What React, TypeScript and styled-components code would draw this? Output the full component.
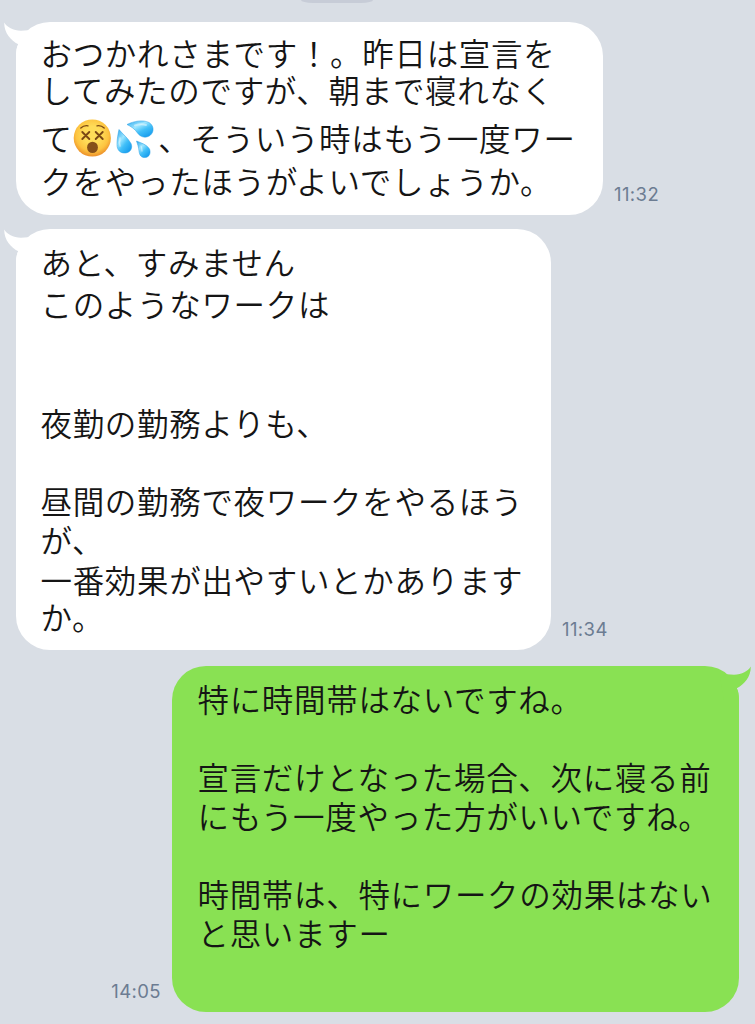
import React from 'react';
import styled, { createGlobalStyle } from 'styled-components';

const GlobalStyle = createGlobalStyle`
  body {
    margin: 0;
    background: #d9dee5;
  }
`;

const Screen = styled.main`
  position: relative;
  box-sizing: border-box;
  width: 755px;
  height: 1024px;
  overflow: hidden;
  background: #d9dee5;
  display: flex;
  flex-direction: column;
`;

const DatePill = styled.div`
  flex: none;
  align-self: center;
  width: 72px;
  height: 3px;
  margin-right: 81px;
  border-radius: 0 0 12px 12px / 0 0 3px 3px;
  background: #c7ccd7;
`;

const Thread = styled.div`
  flex: none;
  display: flex;
  flex-direction: column;
  padding: 18.5px 16px 0;
`;

const MessageRow = styled.div<{ $mine?: boolean; $gap?: number }>`
  display: flex;
  flex-direction: ${(p) => (p.$mine ? 'row-reverse' : 'row')};
  align-items: flex-end;
  gap: 11px;
  margin-top: ${(p) => p.$gap ?? 0}px;
`;

const Bubble = styled.div<{ $mine?: boolean; $width: number; $height: number }>`
  position: relative;
  box-sizing: border-box;
  flex: none;
  width: ${(p) => p.$width}px;
  height: ${(p) => p.$height}px;
  padding: ${(p) => (p.$mine ? '11px 0 0 25.5px' : '12px 0 0 24.5px')};
  border-radius: 34px;
  background: ${(p) => (p.$mine ? '#89e153' : '#ffffff')};
  color: #151515;
  font-family: 'Noto Sans CJK JP', sans-serif;
  font-weight: 350;
  font-size: 31.5px;
  letter-spacing: 0.68px;
`;

const Tail = styled.svg<{ $mine?: boolean }>`
  position: absolute;
  top: 0;
  ${(p) => (p.$mine ? 'right: -13px; transform: scaleX(-1);' : 'left: -13px;')}
  width: 44px;
  height: 36px;
`;

const Line = styled.div<{ $gap?: number }>`
  display: flex;
  height: 36px;
  line-height: 36px;
  margin-top: ${(p) => p.$gap ?? 3}px;
  white-space: pre;
`;

const Emoji = styled.svg`
  flex: none;
  width: 42px;
  height: 42px;
  margin-top: -1.5px;
`;

const AfterEmoji = styled.span`
  margin-left: 1.5px;
`;

const Time = styled.time`
  padding-bottom: 9px;
  color: #6c7c92;
  font: 400 18.5px/24px Inter, sans-serif;
  letter-spacing: 0.4px;
`;

const BubbleTail = ({ mine }: { mine?: boolean }) => (
  <Tail $mine={mine} viewBox="0 0 44 36" aria-hidden>
    <path
      d="M1.2 0.5 C4 5 10 8.5 18 8.8 L25 8.3 L32 12 L28 34 L13 34 C13 29 13.6 25 15.2 22.2 C8 18.5 1.2 11.5 1.2 0.5Z"
      fill={mine ? '#89e153' : '#ffffff'}
    />
  </Tail>
);

const DizzyFace = () => (
  <Emoji viewBox="0 0 42 42" role="img" aria-label="dizzy face">
    <defs>
      <radialGradient id="face" cx="50%" cy="42%" r="58%">
        <stop offset="0.4" stopColor="#ffdc58" />
        <stop offset="0.75" stopColor="#fdc440" />
        <stop offset="1" stopColor="#ec8f2a" />
      </radialGradient>
    </defs>
    <circle cx="19.3" cy="21" r="18.6" fill="url(#face)" />
    <g fill="none" stroke="#7b4814" strokeLinecap="round">
      <path d="M7.8 11 Q11 8 15 8.8 M24 8.8 Q28 8 31.2 11" strokeWidth="1.3" />
      <path d="M9.3 15 L16.3 22 M16.3 15 L9.3 22 M22.7 15 L29.7 22 M29.7 15 L22.7 22" strokeWidth="1.9" />
    </g>
    <ellipse cx="19.5" cy="30.4" rx="5.4" ry="5.7" fill="#86501a" />
  </Emoji>
);

const SweatDrops = () => (
  <Emoji viewBox="0 0 42 42" role="img" aria-label="sweat drops">
    <defs>
      <linearGradient id="drop" x1="0" y1="0" x2="0.8" y2="1">
        <stop offset="0" stopColor="#2ba6ec" />
        <stop offset="0.4" stopColor="#9be5ff" />
        <stop offset="0.65" stopColor="#41bff8" />
        <stop offset="1" stopColor="#149aed" />
      </linearGradient>
    </defs>
    <g fill="url(#drop)" stroke="#249de4" strokeWidth="0.5">
      <path d="M12 7.5 C19 4 28 2.5 34 5.5 C39 8.5 39.5 15 35 18.5 C30 22 25 19.5 22.5 16 C20 12 16 9.5 12 7.5Z" />
      <path d="M4 12.5 C8 17.5 13 21 16 26.5 C18 31 15.5 35.5 10.5 36 C5 36.4 2 33 2 27.5 C2 22 3 17 4 12.5Z" />
      <path d="M21.5 24 C26 26 32 27.5 34.5 32 C36 36 34.5 40 30.5 40.5 C26 41 24.5 38 24 34 C23.7 30 22.5 27 21.5 24Z" />
    </g>
    <g fill="none" stroke="#ffffff" strokeOpacity="0.45" strokeLinecap="round">
      <path d="M20 8.5 Q26 6.5 31 8" strokeWidth="2" />
      <path d="M5 21 Q4 26 5 29" strokeWidth="1.6" />
      <path d="M26 29 Q27 31 27 34" strokeWidth="1.3" />
    </g>
  </Emoji>
);

export default function App() {
  return (
    <>
      <GlobalStyle />
      <Screen>
        <DatePill />
        <Thread>
          <MessageRow>
            <Bubble $width={587} $height={193}>
              <BubbleTail />
              <Line $gap={0}>おつかれさまです！。昨日は宣言を</Line>
              <Line $gap={1}>してみたのですが、朝まで寝れなく</Line>
              <Line $gap={12}>
                て<DizzyFace />
                <SweatDrops />
                <AfterEmoji>、そういう時はもう一度ワー</AfterEmoji>
              </Line>
              <Line $gap={7}>クをやったほうがよいでしょうか。</Line>
            </Bubble>
            <Time>11:32</Time>
          </MessageRow>

          <MessageRow $gap={14.5}>
            <Bubble $width={535} $height={421}>
              <BubbleTail />
              <Line $gap={2}>あと、すみません</Line>
              <Line $gap={6}>このようなワークは</Line>
              <Line $gap={5} />
              <Line $gap={4} />
              <Line $gap={2}>夜勤の勤務よりも、</Line>
              <Line />
              <Line $gap={3}>昼間の勤務で夜ワークをやるほう</Line>
              <Line>が、</Line>
              <Line $gap={4}>一番効果が出やすいとかあります</Line>
              <Line $gap={1}>か。</Line>
            </Bubble>
            <Time>11:34</Time>
          </MessageRow>

          <MessageRow $mine $gap={16}>
            <Bubble $mine $width={567} $height={346}>
              <BubbleTail mine />
              <Line>特に時間帯はないですね。</Line>
              <Line />
              <Line>宣言だけとなった場合、次に寝る前</Line>
              <Line>にもう一度やった方がいいですね。</Line>
              <Line />
              <Line>時間帯は、特にワークの効果はない</Line>
              <Line>と思いますー</Line>
              <Line />
            </Bubble>
            <Time>14:05</Time>
          </MessageRow>
        </Thread>
      </Screen>
    </>
  );
}
